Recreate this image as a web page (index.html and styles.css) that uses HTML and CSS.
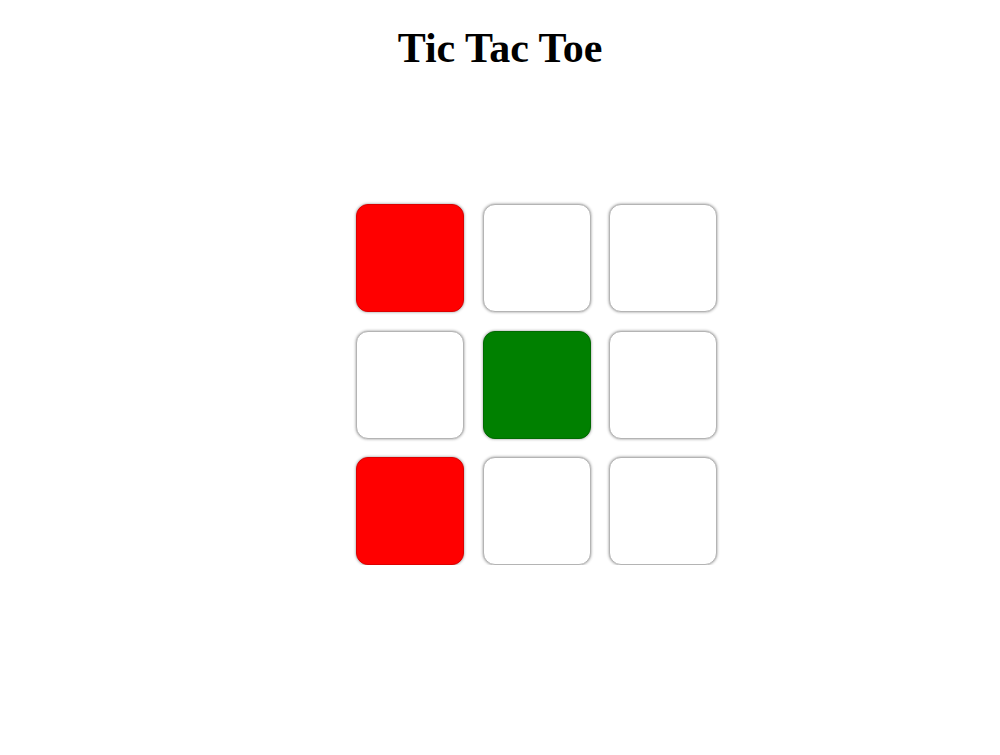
FILE: index.html
```html
<!DOCTYPE html>
<html>
<head>
<meta charset="utf-8">
<title>Tic Tac Toe</title>
<link rel="stylesheet" href="styles.css">
</head>
<body>
<h1 class="title">Tic Tac Toe</h1>
<div class="board">
  <div class="cell red"></div>
  <div class="cell"></div>
  <div class="cell"></div>
  <div class="cell"></div>
  <div class="cell green"></div>
  <div class="cell"></div>
  <div class="cell red"></div>
  <div class="cell"></div>
  <div class="cell"></div>
</div>
</body>
</html>
```
FILE: styles.css
```css
html, body {
  background: #fff;
}
body {
  margin: 8px;
  font-family: "Liberation Serif", "Times New Roman", serif;
}
.title {
  margin: 16px 0 0;
  font-size: 42px;
  font-weight: bold;
  text-align: center;
  color: #000;
}
.board {
  display: grid;
  grid-template-columns: repeat(3, 108px);
  grid-template-rows: repeat(3, 108px);
  gap: 18.5px;
  margin: 132px 0 0 348px;
  width: max-content;
}
.cell {
  box-sizing: border-box;
  border-radius: 12px;
  border: 1px solid #b4b4b4;
  box-shadow: 0 0 3px rgba(0, 0, 0, 0.45);
  background: #fff;
}
.cell.red {
  background: #ff0000;
  border-color: #dd0000;
}
.cell.green {
  background: #008000;
  border-color: #006a00;
}
```
